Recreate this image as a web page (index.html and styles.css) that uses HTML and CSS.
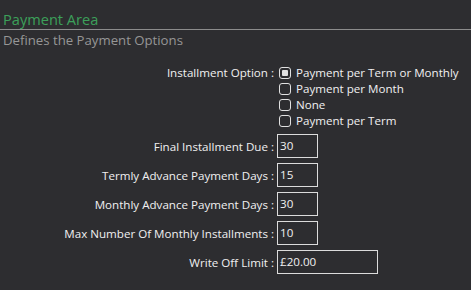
FILE: index.html
```html
<!DOCTYPE html>
<html lang="en">
<head>
  <meta charset="UTF-8">
  <title>Payment Area</title>
  <link rel="stylesheet" href="styles.css">
</head>
<body>
  <div class="section-head">
    <h2>Payment Area</h2>
    <p>Defines the Payment Options</p>
  </div>

  <div class="form">
    <div class="label label-top">Installment Option :</div>
    <div class="options">
      <label class="option"><span class="check checked"></span>Payment per Term or Monthly</label>
      <label class="option"><span class="check"></span>Payment per Month</label>
      <label class="option"><span class="check"></span>None</label>
      <label class="option"><span class="check"></span>Payment per Term</label>
    </div>

    <div class="label">Final Installment Due :</div>
    <div class="field"><div class="box">30</div></div>

    <div class="label">Termly Advance Payment Days :</div>
    <div class="field"><div class="box">15</div></div>

    <div class="label">Monthly Advance Payment Days :</div>
    <div class="field"><div class="box">30</div></div>

    <div class="label">Max Number Of Monthly Installments :</div>
    <div class="field"><div class="box">10</div></div>

    <div class="label">Write Off Limit :</div>
    <div class="field"><div class="box box-wide">£20.00</div></div>
  </div>
</body>
</html>
```

FILE: styles.css
```css
body {
  margin: 0;
  width: 471px;
  height: 290px;
  background: rgb(45, 45, 48);
  color: rgb(240, 240, 240);
  font-family: "Open Sans", "Liberation Sans", sans-serif;
  font-size: 11.6px;
  overflow: hidden;
}

.section-head h2 {
  margin: 0;
  padding: 9px 0 0 3px;
  height: 20px;
  font-size: 14.6px;
  font-weight: 400;
  line-height: 20px;
  color: rgb(60, 160, 90);
  border-bottom: 1px solid rgb(140, 140, 140);
}

.section-head p {
  margin: 0;
  padding: 1px 0 0 3px;
  font-size: 13.2px;
  line-height: 18px;
  color: rgb(150, 150, 150);
}

.form {
  display: grid;
  grid-template-columns: 276px 1fr;
  row-gap: 5px;
  margin-top: 16px;
}

.label {
  display: flex;
  align-items: center;
  justify-content: flex-end;
  padding-right: 2px;
  white-space: nowrap;
}

.label-top {
  align-items: flex-start;
  line-height: 16px;
}

.options {
  display: flex;
  flex-direction: column;
  padding-left: 3px;
}

.option {
  display: flex;
  align-items: center;
  height: 16px;
  line-height: 16px;
  white-space: nowrap;
}

.check {
  box-sizing: border-box;
  width: 12px;
  height: 12px;
  margin-right: 5px;
  border: 1px solid rgb(225, 225, 225);
  border-radius: 3px;
  display: flex;
  align-items: center;
  justify-content: center;
}

.check.checked::after {
  content: "";
  width: 6px;
  height: 6px;
  border-radius: 1px;
  background: rgb(225, 225, 225);
}

.field {
  padding-left: 1px;
}

.box {
  box-sizing: border-box;
  width: 41px;
  height: 24px;
  padding: 2px 0 0 2px;
  border: 1px solid rgb(220, 220, 220);
  line-height: 18px;
}

.box-wide {
  width: 101px;
}
```
